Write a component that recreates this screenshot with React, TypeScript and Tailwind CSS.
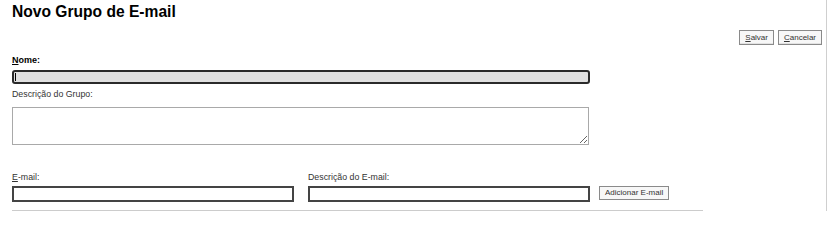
import React from "react";

const font = { fontFamily: '"Liberation Sans", Arial, sans-serif' };

function Btn({ hot, rest }: { hot: string; rest: string }) {
  return (
    <button className="h-[15px] px-[5px] border border-[#8a8a8a] bg-[#f7f7f7] text-[8px] leading-[13px] text-[#333] shadow-[inset_0_-1px_0_#e2e2e2]">
      <span className="underline">{hot}</span>
      {rest}
    </button>
  );
}

export default function App() {
  return (
    <div
      className="w-[827px] h-[211px] overflow-hidden bg-white border-r border-[#cfcfcf] pl-[12px] pr-[4px] text-[#222]"
      style={font}
    >
      <h1 className="pt-[2px] text-[15.6px] leading-[20px] font-bold text-black">
        Novo Grupo de E-mail
      </h1>

      <div className="mt-[8px] flex justify-end gap-[4px]">
        <Btn hot="S" rest="alvar" />
        <Btn hot="C" rest="ancelar" />
      </div>

      <label className="mt-[10px] block text-[9px] leading-[11px] font-bold text-black">
        <span className="underline">N</span>ome:
      </label>
      <div className="relative mt-[4px] w-[578px]">
        <input className="block w-full h-[14px] rounded-[3px] border-2 border-[#2a2a2a] bg-[#e0e0e0] outline-none" />
        <span className="absolute left-[3px] top-[3px] h-[8px] w-[1px] bg-black" />
      </div>

      <label className="mt-[5px] block text-[8.8px] leading-[11px] text-[#333]">
        Descrição do Grupo:
      </label>
      <textarea className="mt-[7px] block w-[577px] h-[38px] border border-[#a9a9a9] bg-white outline-none" />

      <div className="mt-[27px] flex items-end">
        <div className="w-[282px]">
          <label className="block text-[8.8px] leading-[11px] text-[#333]">
            <span className="underline">E</span>-mail:
          </label>
          <input className="mt-[3px] block w-full h-[16px] border-2 border-[#444] bg-white outline-none" />
        </div>
        <div className="ml-[14px] w-[282px]">
          <label className="block text-[8.8px] leading-[11px] text-[#333]">
            Descrição do E-mail:
          </label>
          <input className="mt-[3px] block w-full h-[16px] border-2 border-[#444] bg-white outline-none" />
        </div>
        <button className="ml-[9px] mb-[2px] h-[14px] px-[5px] border border-[#8a8a8a] bg-[#f7f7f7] text-[8px] leading-[12px] text-[#333]">
          Adicionar E-mail
        </button>
      </div>

      <hr className="mt-[8px] w-[691px] border-0 border-t border-[#cccccc]" />
    </div>
  );
}
